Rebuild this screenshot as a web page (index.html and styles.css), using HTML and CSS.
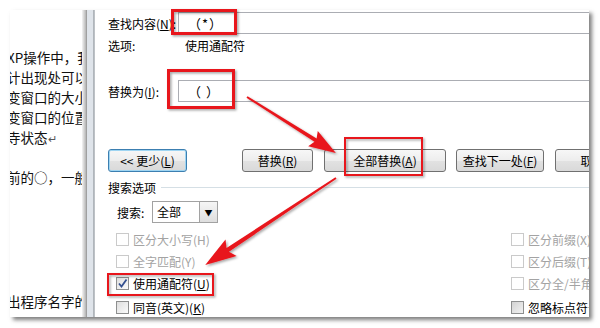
FILE: index.html
```html
<!DOCTYPE html>
<html lang="zh-CN">
<head>
  <meta charset="UTF-8">
  <title>查找和替换</title>
  <link rel="stylesheet" href="styles.css">
</head>
<body>

<div class="shot">
  <div class="doc">
    <p>XP操作中，我</p>
    <p>计出现处可以</p>
    <p>变窗口的大小</p>
    <p>变窗口的位置</p>
    <p>寺状态<span class="mark">↵</span></p>
    <p></p>
    <p>前的○，一般</p>
    <p class="far">出程序名字的</p>
  </div>

  <div class="frame"></div>

  <div class="dialog">
    <div class="row">
      <span class="label">查找内容(<u>N</u>):</span>
      <div class="field">（*）</div>
    </div>
    <div class="opts">
      <span class="label">选项:</span>
      <span class="opt-val">使用通配符</span>
    </div>
    <div class="row repl">
      <span class="label">替换为(<u>I</u>):</span>
      <div class="field">（ ）</div>
    </div>

    <div class="buttons">
      <div class="btn less">&lt;&lt; 更少(<u>L</u>)</div>
      <div class="btn replace">替换(<u>R</u>)</div>
      <div class="btn all">全部替换(<u>A</u>)</div>
      <div class="btn next">查找下一处(<u>F</u>)</div>
      <div class="btn cancel">取消</div>
    </div>

    <div class="group">搜索选项</div>

    <div class="search">
      <span class="search-label">搜索:</span>
      <div class="select">
        <span class="select-val">全部</span>
        <span class="drop">▼</span>
      </div>
    </div>

    <div class="checks">
      <div class="check off"><span class="box"></span>区分大小写(H)</div>
      <div class="check off"><span class="box"></span>区分前缀(X)</div>
      <div class="check off"><span class="box"></span>全字匹配(Y)</div>
      <div class="check off"><span class="box"></span>区分后缀(T)</div>
      <div class="check"><span class="box"><svg width="11" height="11" viewBox="0 0 11 11"><polyline points="2,5.5 4.5,8.5 9.5,1.5" fill="none" stroke="#34508f" stroke-width="1.8"/></svg></span>使用通配符(<u>U</u>)</div>
      <div class="check off"><span class="box"></span>区分全/半角(M)</div>
      <div class="check"><span class="box"></span>同音(英文)(<u>K</u>)</div>
      <div class="check"><span class="box filled"></span>忽略标点符号(S)</div>
    </div>
  </div>
</div>

<!-- red marks drawn over the screenshot -->
<svg class="marks" width="600" height="328" viewBox="0 0 600 328">
  <defs>
    <filter id="shade" x="-20%" y="-20%" width="140%" height="140%">
      <feDropShadow dx="1.5" dy="1.5" stdDeviation="1" flood-color="#000" flood-opacity="0.35"/>
    </filter>
  </defs>
  <g filter="url(#shade)" fill="none" stroke="#e8161c">
    <rect x="172.5" y="10.5" width="63" height="23" stroke-width="3"/>
    <rect x="168.5" y="70.5" width="65" height="37" stroke-width="3"/>
    <rect x="345" y="138" width="77" height="37" stroke-width="2"/>
    <rect x="108" y="274" width="105" height="21" stroke-width="2"/>
  </g>
  <g filter="url(#shade)" fill="#e8161c">
    <path transform="translate(247 97) rotate(32.2)" d="M0,-1 L81,-2 L78,-9 L105,0 L78,9 L81,2 L0,1 Z"/>
    <path transform="translate(336 178) rotate(146.4)" d="M0,-1 L130,-2.2 L126,-10 L157,0 L126,10 L130,2.2 L0,1 Z"/>
  </g>
</svg>

</body>
</html>
```

FILE: styles.css
```css
* {
  box-sizing: border-box;
}

body {
  margin: 0;
  width: 600px;
  height: 328px;
  overflow: hidden;
  position: relative;
  background: #fff;
  font-family: "Noto Sans CJK SC", "Liberation Sans", sans-serif;
  color: #000;
}

.shot {
  margin: 10px 0 0 10px;
  width: 579px;
  height: 307px;
  display: flex;
  overflow: hidden;
  background: #fff;
  box-shadow: 3px 3px 4px rgba(0, 0, 0, 0.5);
}

/* word document behind the dialog */
.doc {
  width: 72px;
  flex: none;
  overflow: hidden;
  padding-top: 37px;
  font-size: 13.5px;
  line-height: 20px;
  white-space: nowrap;
  color: #111;
}

.doc p {
  margin: 0 0 0 -3px;
  height: 20px;
}

.doc .far {
  margin-top: 104px;
}

.doc .mark {
  font-size: 11px;
  color: #555;
}

.frame {
  width: 13px;
  flex: none;
  background: linear-gradient(to right, #f4f4f4 0, #b4b4b4 4px, #8c8c8c 5px, #dfe4ea 5px, #dfe4ea 11px, #a9afb5 11px, #c4c8cc 13px);
}

/* find & replace dialog */
.dialog {
  flex: 1;
  overflow: hidden;
  padding-left: 13px;
  display: flex;
  flex-direction: column;
  font-size: 12px;
  background: #fff;
}

.row {
  display: flex;
  align-items: center;
  height: 22px;
  margin-top: 2px;
  flex: none;
}

.row.repl {
  margin-top: 27px;
}

.label {
  width: 70px;
  flex: none;
  white-space: nowrap;
}

.field {
  flex: none;
  width: 430px;
  height: 22px;
  border: 1px solid #abadb3;
  padding-left: 9px;
  display: flex;
  align-items: center;
  background: #fff;
  white-space: pre;
  font-size: 13px;
  letter-spacing: 1px;
}

.opts {
  display: flex;
  align-items: center;
  height: 16px;
  margin-top: 3px;
  flex: none;
}

.opt-val {
  margin-left: 7px;
}

.buttons {
  display: flex;
  height: 23px;
  margin-top: 47px;
  flex: none;
}

.btn {
  flex: none;
  height: 23px;
  border: 1px solid #707070;
  border-radius: 3px;
  background: linear-gradient(#f7f7f7 0%, #ededed 50%, #e2e2e2 51%, #d9d9d9 100%);
  display: flex;
  align-items: center;
  justify-content: center;
  white-space: nowrap;
}

.less {
  width: 79px;
  border-color: #3c7fb1;
  box-shadow: inset 0 0 0 1px #9fd5f2;
}

.replace {
  width: 71px;
  margin-left: 55px;
}

.all {
  width: 122px;
  margin-left: 11px;
}

.next {
  width: 88px;
  margin-left: 10px;
}

.cancel {
  width: 75px;
  margin-left: 11px;
}

.group {
  display: flex;
  align-items: center;
  height: 16px;
  margin-top: 7px;
  flex: none;
}

.group::after {
  content: "";
  flex: 1;
  margin-left: 5px;
  border-top: 1px solid #d5dfe5;
}

.search {
  display: flex;
  align-items: center;
  height: 22px;
  margin-top: 6px;
  margin-left: 9px;
  flex: none;
}

.search-label {
  width: 35px;
}

.select {
  width: 66px;
  height: 22px;
  border: 1px solid #a2a2a2;
  display: flex;
  background: #fff;
}

.select-val {
  flex: 1;
  padding-left: 4px;
  line-height: 20px;
}

.drop {
  width: 18px;
  border-left: 1px solid #a2a2a2;
  background: linear-gradient(#f6f6f6, #dedede);
  font-size: 8px;
  display: flex;
  align-items: center;
  justify-content: center;
}

.checks {
  display: grid;
  grid-template-columns: 395px auto;
  grid-template-rows: 22px 22px 22px 26px;
  margin-top: 5px;
  margin-left: 8px;
  flex: none;
}

.check {
  display: flex;
  align-items: center;
  white-space: nowrap;
}

.box {
  width: 13px;
  height: 13px;
  flex: none;
  margin-right: 4px;
  border: 1px solid #8e8f8f;
  background: linear-gradient(135deg, #dedede, #fbfbfb);
  display: flex;
  align-items: center;
  justify-content: center;
}

.box.filled {
  background: linear-gradient(135deg, #d2d2d2, #f2f2f2);
}

.check.off {
  color: #a3a3a3;
}

.check.off .box {
  border-color: #cacaca;
  background: #fff;
}

.marks {
  position: absolute;
  top: 0;
  left: 0;
  pointer-events: none;
}
```
